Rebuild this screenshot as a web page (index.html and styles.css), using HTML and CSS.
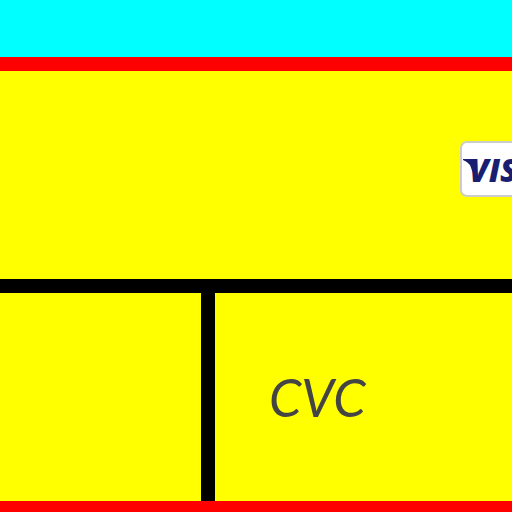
FILE: index.html
```
<!DOCTYPE html>
<html lang="en">
<head>
<meta charset="utf-8">
<title>Card details</title>
<link rel="stylesheet" href="styles.css">
</head>
<body>
<header class="top"></header>
<form class="card-form">
  <div class="row row-number">
    <input class="field" type="text" aria-label="Card number">
    <svg class="brand" viewBox="0 0 84 56" role="img" aria-label="Visa">
      <rect class="brand-plate" x="1" y="1" width="82" height="54" rx="6"/>
      <path class="brand-ink" d="M3 18H11Q14 18 15 21L19 40H16L10 24Q8 21 3 19Z"/>
      <text class="brand-ink brand-name" x="9" y="41">VISA</text>
    </svg>
  </div>
  <div class="row row-details">
    <input class="field expiry" type="text" aria-label="Expiry date">
    <input class="field cvc" type="text" aria-label="CVC" placeholder="CVC">
  </div>
</form>
</body>
</html>
```
FILE: styles.css
```
* {
  box-sizing: border-box;
}

body {
  margin: 0;
  height: 100vh;
  overflow: hidden;
  background: #0ff;
}

.top {
  height: 57px;
}

.card-form {
  border: solid #f00;
  border-width: 14px 0;
  background: #ff0;
  overflow: hidden;
}

.row {
  display: flex;
  align-items: center;
  height: 208px;
}

.row-number {
  padding-bottom: 12px;
}

.row-details {
  height: 222px;
  border-top: 14px solid #000;
}

.field {
  flex: 1;
  min-width: 0;
  height: 100%;
  margin: 0;
  padding: 0 54px;
  border: 0;
  border-radius: 0;
  outline: 0;
  background: transparent;
  color: #444;
  font: italic 52px Lato, sans-serif;
}

.field::placeholder {
  color: #444;
  opacity: 1;
}

.expiry {
  flex: 0 0 42%;
  border-right: 14px solid #000;
}

.brand {
  flex: none;
  width: 84px;
  height: 56px;
  margin-right: -32px;
}

.brand-plate {
  fill: #fff;
  stroke: #ccc;
  stroke-width: 2px;
}

.brand-ink {
  fill: #191e70;
}

.brand-name {
  font: italic 800 32px "Open Sans", sans-serif;
}
```
